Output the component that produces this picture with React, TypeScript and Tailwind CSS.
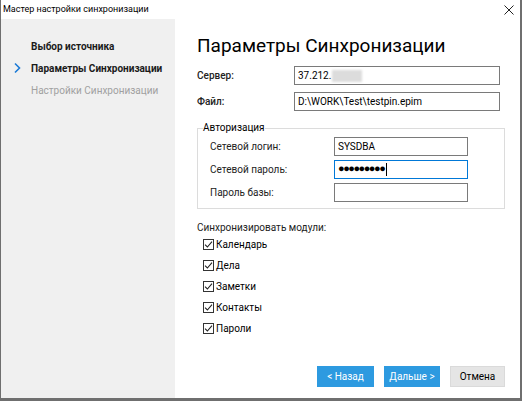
import React from "react";

const font = { fontFamily: 'Roboto, "Noto Sans", Arial, sans-serif' };

const Check: React.FC<{ label: string }> = ({ label }) => (
  <label className="flex items-center h-[16px] text-[10px] text-black">
    <span className="w-[11px] h-[11px] border border-[#333] bg-white flex items-center justify-center mr-[2px]">
      <svg width="9" height="9" viewBox="0 0 9 9">
        <path d="M1 4.6 L3.4 7 L8 1.6" fill="none" stroke="#222" strokeWidth="1.1" />
      </svg>
    </span>
    {label}
  </label>
);

const Field: React.FC<{ value?: string; focused?: boolean; className?: string; password?: boolean; blurred?: boolean }> = ({
  value,
  focused,
  className,
  password,
  blurred,
}) => (
  <div
    className={`h-[19px] bg-white border flex items-center pl-[3px] text-[10px] text-black whitespace-nowrap ${
      focused ? "border-[#0078d7]" : "border-[#7a7a7a]"
    } ${className ?? ""}`}
  >
    {password ? (
      <>
        <span className="tracking-[-1.5px] text-[11px]">●●●●●●●●●</span>
        <span className="w-px h-[13px] bg-black ml-[2px]" />
      </>
    ) : (
      value
    )}
    {blurred && <span className="ml-[1px] w-[30px] h-[12px] bg-[#dcdcdc] blur-[1px]" />}
  </div>
);

export default function App() {
  return (
    <div style={font} className="w-[522px] h-[401px] bg-white flex flex-col border-l border-r-2 border-b-[3px] border-[#6f6f6f] overflow-hidden">
      {/* Заголовок окна */}
      <div className="h-[19px] flex items-center justify-between pl-[2px] pr-[6px]">
        <span className="text-[9px] text-black">Мастер настройки синхронизации</span>
        <svg width="10" height="10" viewBox="0 0 10 10">
          <path d="M0.5 0.5 L9.5 9.5 M9.5 0.5 L0.5 9.5" stroke="#222" strokeWidth="1" />
        </svg>
      </div>

      <div className="flex flex-1">
        {/* Шаги */}
        <div className="w-[174px] bg-[#f0f0f0] flex flex-col pt-[16px] text-[10px] whitespace-nowrap">
          <div className="h-[22px] flex items-center pl-[30px] font-bold text-[#1a1a1a]">Выбор источника</div>
          <div className="h-[22px] flex items-center font-bold text-[#1a1a1a]">
            <svg width="30" height="12" viewBox="0 0 30 12">
              <path d="M14 1.5 L18.5 6 L14 10.5" fill="none" stroke="#1b7ad6" strokeWidth="1.6" />
            </svg>
            Параметры Синхронизации
          </div>
          <div className="h-[22px] flex items-center pl-[30px] text-[#a0a0a0]">Настройки Синхронизации</div>
        </div>

        {/* Параметры */}
        <div className="flex-1 flex flex-col pl-[22px] pr-[15px]">
          <h1 className="mt-[14px] text-[19px] leading-[26px] text-black whitespace-nowrap">Параметры Синхронизации</h1>

          <div className="mt-[7px] flex items-center">
            <span className="w-[97px] text-[10px] font-medium text-[#222]">Сервер:</span>
            <Field className="w-[206px]" value="37.212." blurred />
          </div>
          <div className="mt-[7px] flex items-center">
            <span className="w-[97px] text-[10px] font-medium text-[#222]">Файл:</span>
            <Field className="w-[206px]" value="D:\WORK\Test\testpin.epim" />
          </div>

          <fieldset className="mt-[9px] w-[308px] border border-[#dcdcdc] pb-[6px]">
            <legend className="text-[10px] leading-[16px] text-black ml-[5px] px-0">Авторизация</legend>
            <div className="flex flex-col gap-[4px] mt-[1px] pl-[12px]">
              <div className="flex items-center">
                <span className="w-[124px] text-[10px] text-[#222]">Сетевой логин:</span>
                <Field className="w-[134px]" value="SYSDBA" />
              </div>
              <div className="flex items-center">
                <span className="w-[124px] text-[10px] text-[#222]">Сетевой пароль:</span>
                <Field className="w-[134px]" focused password />
              </div>
              <div className="flex items-center">
                <span className="w-[124px] text-[10px] text-[#222]">Пароль базы:</span>
                <Field className="w-[134px]" />
              </div>
            </div>
          </fieldset>

          <div className="mt-[11px] text-[10px] leading-[16px] text-[#222]">Синхронизировать модули:</div>
          <div className="flex flex-col gap-[5px] pl-[6px]">
            <Check label="Календарь" />
            <Check label="Дела" />
            <Check label="Заметки" />
            <Check label="Контакты" />
            <Check label="Пароли" />
          </div>

          <div className="mt-auto mb-[11px] flex justify-end gap-[10px] text-[10px]">
            <button className="w-[57px] h-[21px] bg-[#2d9ae0] text-white">&lt; Назад</button>
            <button className="w-[56px] h-[21px] bg-[#2d9ae0] text-white">Дальше &gt;</button>
            <button className="w-[55px] h-[21px] bg-[#e5e5e5] border border-[#dadada] text-black">Отмена</button>
          </div>
        </div>
      </div>
    </div>
  );
}
